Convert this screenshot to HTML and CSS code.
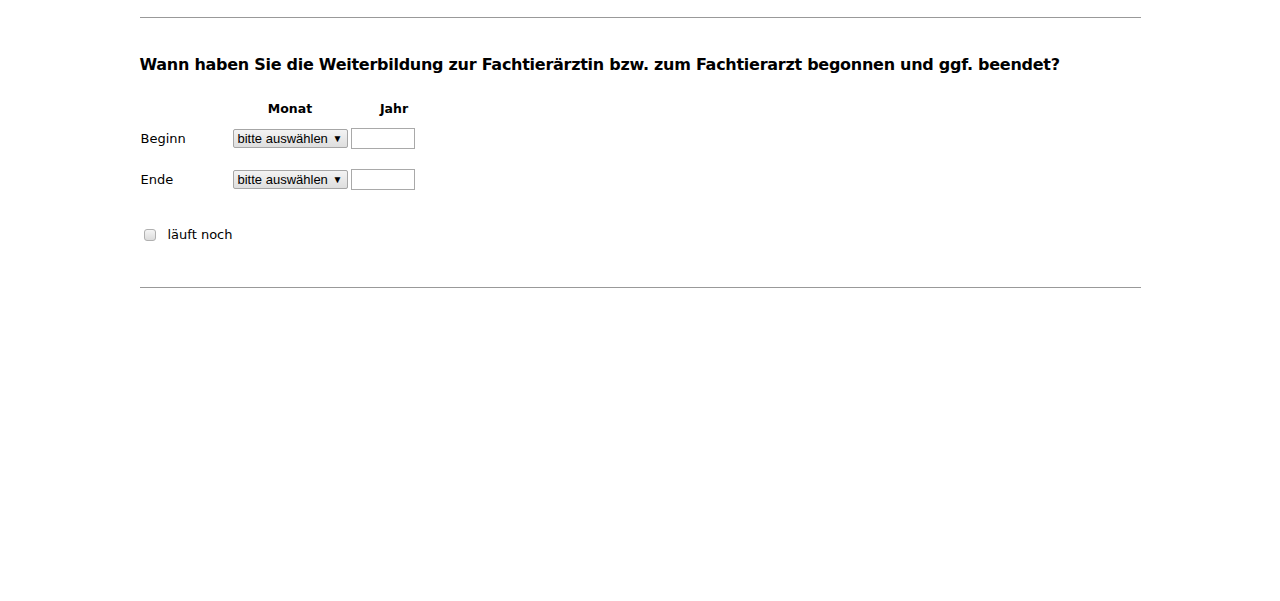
FILE: index.html
```html
<!DOCTYPE html>
<html lang="de">
<head>
    <meta charset="UTF-8">
    <title>Weiterbildung</title>
    <link rel="stylesheet" href="styles.css">
</head>
<body>
    <div class="container">
        <hr class="rule">

        <h2 class="question">Wann haben Sie die Weiterbildung zur Fachtierärztin bzw. zum Fachtierarzt begonnen und ggf. beendet?</h2>

        <table class="dates">
            <thead>
                <tr>
                    <th></th>
                    <th class="col-month">Monat</th>
                    <th class="col-year">Jahr</th>
                </tr>
            </thead>
            <tbody>
                <tr>
                    <td class="label">Beginn</td>
                    <td><div class="select">bitte auswählen <span class="arrow">&#9660;</span></div></td>
                    <td><input type="text" class="year"></td>
                </tr>
                <tr>
                    <td class="label">Ende</td>
                    <td><div class="select">bitte auswählen <span class="arrow">&#9660;</span></div></td>
                    <td><input type="text" class="year"></td>
                </tr>
            </tbody>
        </table>

        <label class="running">
            <span class="box"></span>
            läuft noch
        </label>

        <hr class="rule">
    </div>
</body>
</html>
```

FILE: styles.css
```css
* {
    margin: 0;
    padding: 0;
    box-sizing: border-box;
}

body {
    background: #fff;
    color: #000;
    font-family: "DejaVu Sans", Verdana, sans-serif;
    font-size: 13px;
}

.container {
    width: 1001px;
    margin: 0 auto;
    padding-top: 17px;
}

.rule {
    border: none;
    border-top: 1px solid #999;
    height: 0;
}

.question {
    font-size: 16px;
    font-weight: bold;
    letter-spacing: -0.27px;
    margin-top: 37px;
    line-height: 20px;
}

.dates {
    border-collapse: collapse;
    margin-top: 24px;
}

.dates th {
    font-size: 12.5px;
    font-weight: bold;
    height: 19px;
}

.dates th:first-child {
    width: 93px;
}

.col-month {
    width: 115px;
    text-align: center;
}

.col-year {
    width: 67px;
    text-align: center;
    padding-left: 26px;
}

.dates td {
    height: 41px;
    vertical-align: middle;
}

.label {
    padding-left: 1px;
}

.select {
    display: flex;
    align-items: center;
    justify-content: space-between;
    width: 115px;
    height: 19px;
    padding: 0 4px 0 4px;
    border: 1px solid #a6a6a6;
    border-radius: 2px;
    background: linear-gradient(#f3f3f3, #dedede);
    font-family: "Liberation Sans", Arial, sans-serif;
    font-size: 13px;
}

.arrow {
    font-size: 10px;
}

.year {
    display: block;
    width: 64px;
    height: 21px;
    margin-left: 3px;
    border: 1px solid #a9a9a9;
    background: #fff;
}

.running {
    display: flex;
    align-items: center;
    margin: 27px 0 45px 4px;
}

.box {
    width: 12px;
    height: 12px;
    border: 1px solid #b0b0b0;
    border-radius: 3px;
    background: linear-gradient(#f5f5f5, #dcdcdc);
    margin-right: 12px;
}
```
